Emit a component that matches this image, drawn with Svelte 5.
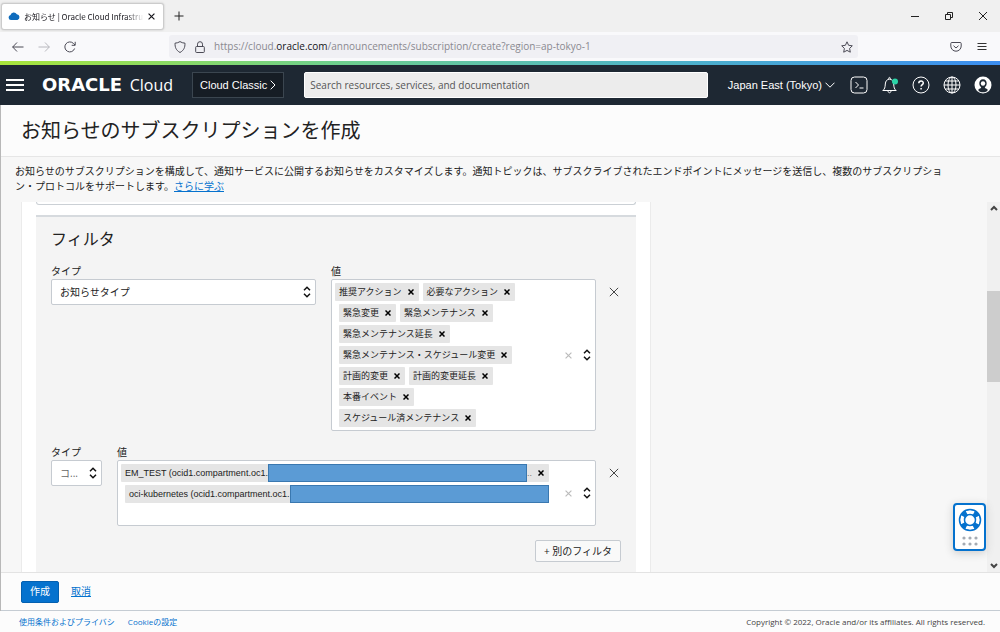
<script lang="ts">
  const announcementTypes = [
    '推奨アクション',
    '必要なアクション',
    '緊急変更',
    '緊急メンテナンス',
    '緊急メンテナンス延長',
    '緊急メンテナンス・スケジュール変更',
    '計画的変更',
    '計画的変更延長',
    '本番イベント',
    'スケジュール済メンテナンス',
  ];
</script>

{#snippet updown()}
  <svg class="updown" viewBox="0 0 8 12" aria-hidden="true">
    <path d="M1 4.2 4 1.2l3 3M1 7.8l3 3 3-3" />
  </svg>
{/snippet}

{#snippet cross()}
  <svg class="cross" viewBox="0 0 12 12" aria-hidden="true"><path d="m1 1 10 10M11 1 1 11" /></svg>
{/snippet}

<div class="window">
  <!-- Browser tabs -->
  <div class="tabs">
    <div class="tab">
      <svg class="tab__icon" viewBox="0 0 12 8" aria-hidden="true">
        <path d="M3 8a2.6 2.6 0 0 1-.5-5.100A3.500 3.500 0 0 1 8.800 2.200 3 3 0 0 1 9.500 8z" />
      </svg>
      <span class="tab__title">お知らせ | Oracle Cloud Infrastru</span>
      <button class="tab__close" aria-label="Close tab">{@render cross()}</button>
    </div>
    <button class="tabs__new" aria-label="New tab">
      <svg viewBox="0 0 10 10"><path d="M5 .5v9M.5 5h9" /></svg>
    </button>
    <div class="tabs__window">
      <button aria-label="Minimize"><svg viewBox="0 0 10 10"><path d="M1 5.500h8" /></svg></button>
      <button aria-label="Restore">
        <svg viewBox="0 0 10 10"><path d="M1.500 3.500h5v5h-5zM3.500 3.500v-2h5v5h-2" /></svg>
      </button>
      <button aria-label="Close"><svg viewBox="0 0 10 10"><path d="m1 1 8 8M9 1 1 9" /></svg></button>
    </div>
  </div>

  <!-- Browser toolbar -->
  <div class="toolbar">
    <button aria-label="Back"><svg viewBox="0 0 12 12"><path d="M11.500 6h-11M5 1.500.7 6 5 10.500" /></svg></button>
    <button class="toolbar__off" aria-label="Forward">
      <svg viewBox="0 0 12 12"><path d="M.5 6h11M7 1.500 11.300 6 7 10.500" /></svg>
    </button>
    <button aria-label="Reload">
      <svg viewBox="0 0 12 12"><path d="M10.600 7.500A5 5 0 1 1 9.500 2.500L11 4M11.200.8v3.500H7.700" /></svg>
    </button>
    <div class="address">
      <svg viewBox="0 0 12 12"><path d="M6 .6C4.500 1.600 3 2 1 2.200c0 4.300 1 7 5 9.300 4-2.300 5-5 5-9.300C9 2 7.500 1.600 6 .6z" /></svg>
      <svg viewBox="0 0 12 12">
        <path d="M2.500 5.500h7a.8.8 0 0 1 .8.8v4.400a.8.8 0 0 1-.8.8h-7a.8.8 0 0 1-.8-.8V6.300a.8.8 0 0 1 .8-.8zM3.500 5.500V3.200a2.500 2.500 0 0 1 5 0v2.300" />
      </svg>
      <span class="address__url">https://cloud.<b>oracle.com</b>/announcements/subscription/create?region=ap-tokyo-1</span>
      <button aria-label="Bookmark">
        <svg viewBox="0 0 12 12"><path d="m6 .8 1.600 3.500 3.700.5-2.700 2.600.7 3.800L6 9.400l-3.300 1.800.7-3.800L.7 4.800l3.700-.5z" /></svg>
      </button>
    </div>
    <button aria-label="Pocket">
      <svg viewBox="0 0 12 12">
        <path d="M1.800 1.500h8.400a1 1 0 0 1 1 1V5a5.200 5.200 0 0 1-10.400 0V2.500a1 1 0 0 1 1-1zM3.500 4.700 6 7l2.500-2.300" />
      </svg>
    </button>
    <button class="toolbar__menu" aria-label="Menu"><svg viewBox="0 0 12 12"><path d="M1.500 2.500h9M1.500 5.500h9M1.500 8.500h9" /></svg></button>
  </div>

  <!-- Console header -->
  <header class="header">
    <button class="header__menu" aria-label="Navigation menu">
      <svg viewBox="0 0 18 12"><path d="M0 1h18M0 6h18M0 11h18" /></svg>
    </button>
    <a class="logo" href="#home"><span class="logo__name">ORACLE</span><span class="logo__product">Cloud</span></a>
    <button class="classic">
      Cloud Classic
      <svg viewBox="0 0 6 10"><path d="m.7.700 4.300 4.300-4.300 4.300" /></svg>
    </button>
    <input class="search" type="search" aria-label="Search" placeholder="Search resources, services, and documentation" />
    <button class="region">
      Japan East (Tokyo)
      <svg viewBox="0 0 10 6"><path d="m.5.700 4.500 4.500L9.500.700" /></svg>
    </button>
    <div class="header__tools">
      <button aria-label="Cloud Shell">
        <svg viewBox="0 0 18 18"><rect x="1" y="1" width="16" height="16" rx="3.500" /><path d="m5.500 6 3 3-3 3M9.500 12h4" /></svg>
      </button>
      <button aria-label="Announcements">
        <svg viewBox="0 0 18 18">
          <path d="M1.800 14.500c2-1.600 2.300-3 2.500-6.500.2-3 1.800-4.800 4.200-4.800s4 1.800 4.200 4.800c.2 3.500.5 4.900 2.500 6.500zM7 14.800c0 2.600 3 2.600 3 0M7.700 3c0-2.200 1.600-2.200 1.600 0" />
          <circle class="dot" cx="14" cy="5.500" r="3" />
        </svg>
      </button>
      <button aria-label="Help">
        <svg viewBox="0 0 18 18">
          <circle cx="9" cy="9" r="8" />
          <path class="thick" d="M6.800 7.200C6.800 4.300 11.300 4.300 11.300 7c0 1.700-2.200 1.700-2.200 3.600M9.100 12v1.500" />
        </svg>
      </button>
      <button aria-label="Language">
        <svg viewBox="0 0 18 18">
          <circle cx="9" cy="9" r="8" />
          <ellipse cx="9" cy="9" rx="4" ry="8" />
          <path d="M9 1v16M1 9h16M2.300 5h13.400M2.300 13h13.400" />
        </svg>
      </button>
      <button aria-label="Profile">
        <svg viewBox="0 0 18 18">
          <circle class="disc" cx="9" cy="9" r="8.500" />
          <path class="person" d="M9 3.200c-2.400 0-3.700 1.700-3.700 4 0 1.800.8 3.200 1.900 4-.3 1.300-1.500 1.400-2.700 2v1.500c2.500 2 6.500 2 9 0v-1.500c-1.200-.6-2.400-.7-2.700-2 1.100-.8 1.900-2.200 1.900-4 0-2.300-1.300-4-3.700-4z" />
          <circle class="disc" cx="9" cy="7.500" r="2.200" />
        </svg>
      </button>
    </div>
  </header>

  <main class="page">
    <h1 class="page__title">お知らせのサブスクリプションを作成</h1>
    <p class="page__intro">
      お知らせのサブスクリプションを構成して、通知サービスに公開するお知らせをカスタマイズします。通知トピックは、サブスクライブされたエンドポイントにメッセージを送信し、複数のサブスクリプション・プロトコルをサポートします。<a href="#learn">さらに学ぶ</a>
    </p>

    <div class="scroller">
      <div class="card">
        <div class="card__previous"></div>
        <section class="filters">
          <h2>フィルタ</h2>

          <div class="filter">
            <div class="field">
              <label for="type-1">タイプ</label>
              <div class="select">
                <select id="type-1"><option>お知らせタイプ</option></select>
                {@render updown()}
              </div>
            </div>
            <div class="field" role="group" aria-labelledby="values-1">
              <span id="values-1">値</span>
              <div class="multi">
                <ul class="chips">
                  {#each announcementTypes as type}
                    <li class="chip">
                      {type}
                      <button aria-label="{type}を削除">{@render cross()}</button>
                    </li>
                  {/each}
                </ul>
                <button class="multi__clear" aria-label="クリア">{@render cross()}</button>
                <button aria-label="開く">{@render updown()}</button>
              </div>
            </div>
            <button class="filter__remove" aria-label="フィルタを削除">{@render cross()}</button>
          </div>

          <div class="filter">
            <div class="field field--narrow">
              <label for="type-2">タイプ</label>
              <div class="select select--muted">
                <select id="type-2"><option>コ...</option></select>
                {@render updown()}
              </div>
            </div>
            <div class="field" role="group" aria-labelledby="values-2">
              <span id="values-2">値</span>
              <div class="multi multi--tall">
                <ul class="chips">
                  <li class="chip chip--wide">
                    EM_TEST (ocid1.compartment.oc1.<span class="mask"></span><span class="chip__more">..</span>
                    <button aria-label="EM_TESTを削除">{@render cross()}</button>
                  </li>
                  <li class="chip chip--wide chip--masked">
                    oci-kubernetes (ocid1.compartment.oc1.<span class="mask"></span>
                  </li>
                </ul>
                <button class="multi__clear" aria-label="クリア">{@render cross()}</button>
                <button aria-label="開く">{@render updown()}</button>
              </div>
            </div>
            <button class="filter__remove" aria-label="フィルタを削除">{@render cross()}</button>
          </div>

          <button class="filters__add">+ 別のフィルタ</button>
        </section>
      </div>

      <div class="scrollbar" aria-hidden="true">
        <svg viewBox="0 0 8 6"><path d="m1 5 3-3 3 3" /></svg>
        <div class="scrollbar__thumb"></div>
        <svg viewBox="0 0 8 6"><path d="m1 1 3 3 3-3" /></svg>
      </div>

      <button class="help" aria-label="Support">
        <svg viewBox="0 0 24 24">
          <circle class="ring" cx="12" cy="12" r="8" />
          <circle class="ring-gap" cx="12" cy="12" r="8" />
          <circle class="ring-line" cx="12" cy="12" r="10.500" />
          <circle class="ring-line" cx="12" cy="12" r="5.500" />
        </svg>
        <svg class="help__grip" viewBox="0 0 16 10">
          {#each [2, 8, 14] as x}
            <circle cx={x} cy="2" r="1.600" />
            <circle cx={x} cy="8" r="1.600" />
          {/each}
        </svg>
      </button>
    </div>

    <div class="actions">
      <button class="actions__create">作成</button>
      <a href="#cancel">取消</a>
    </div>
  </main>

  <footer class="footer">
    <a href="#terms">使用条件およびプライバシ</a>
    <a href="#cookies">Cookieの設定</a>
    <span>Copyright © 2022, Oracle and/or its affiliates. All rights reserved.</span>
  </footer>
</div>

<style>
  :global(body) {
    margin: 0;
  }

  .window {
    display: flex;
    flex-direction: column;
    height: 100vh;
    overflow: hidden;
    background: #fcfcfc;
    color: #222;
    font: 10px/15px 'Open Sans', 'Noto Sans CJK JP', sans-serif;
  }

  .window * {
    box-sizing: border-box;
  }

  button {
    display: flex;
    align-items: center;
    justify-content: center;
    padding: 0;
    border: 0;
    background: none;
    color: inherit;
    font: inherit;
  }

  svg {
    display: block;
    flex-shrink: 0;
    width: 12px;
    height: 12px;
    fill: none;
    stroke: currentColor;
  }

  a {
    color: #0572ce;
  }

  /* Browser */
  .tabs {
    display: flex;
    align-items: center;
    flex-shrink: 0;
    height: 32px;
    padding: 0 12px 0 1px;
    background: #f0f0f0;
  }

  .tab {
    display: flex;
    align-items: center;
    gap: 4px;
    width: 163px;
    height: 27px;
    padding: 0 8px 0 6px;
    border: 1px solid #ccc;
    border-radius: 3px;
    background: #fff;
    box-shadow: 0 0 2px #bbb;
    color: #15141a;
    font-family: 'Noto Sans CJK JP', sans-serif;
    font-size: 8px;
  }

  .tab__icon {
    height: 8px;
    fill: #0f6cbd;
    stroke: none;
  }

  .tab__title {
    flex: 1;
    overflow: hidden;
    white-space: nowrap;
    mask-image: linear-gradient(to right, #000 85%, transparent);
  }

  .tab__close svg {
    width: 7px;
    height: 7px;
    stroke-width: 2;
  }

  .tabs__new {
    margin-left: 10px;
  }

  .tabs__new svg,
  .tabs__window svg {
    width: 10px;
    height: 10px;
  }

  .tabs__window {
    display: flex;
    gap: 24px;
    margin-left: auto;
  }

  .toolbar {
    display: flex;
    align-items: center;
    gap: 14px;
    flex-shrink: 0;
    height: 29px;
    padding: 0 12px;
    background: #f9f9fb;
    color: #4b4a55;
  }

  .toolbar__off {
    color: #b8b8be;
  }

  .toolbar__menu {
    color: #333;
  }

  .address {
    display: flex;
    align-items: center;
    gap: 8px;
    flex: 1;
    height: 23px;
    margin: 0 78px 0 79px;
    padding: 0 5px;
    border-radius: 3px;
    background: #f0f0f4;
  }

  .address__url {
    flex: 1;
    color: #8a8990;
    white-space: nowrap;
  }

  .address__url b {
    color: #15141a;
    font-weight: 400;
  }

  /* Console header */
  .header {
    display: flex;
    align-items: center;
    flex-shrink: 0;
    height: 44px;
    padding: 0 8px 0 6px;
    border-top: 4px solid;
    border-image: linear-gradient(to right, #a9e53b, #6fd08c 33%, #4eb3c8 66%, #3b8df0) 1;
    background: #1e2833;
    color: #fff;
    font-family: 'Liberation Sans', sans-serif;
    font-size: 11px;
  }

  .header__menu svg {
    width: 18px;
    height: 12px;
    stroke-width: 2;
  }

  .logo {
    display: flex;
    align-items: center;
    justify-content: space-between;
    width: 131px;
    margin: 0 19px 0 18px;
    color: #fff;
    line-height: 20px;
    text-decoration: none;
  }

  .logo__name {
    font: 700 18px/20px 'DejaVu Sans', sans-serif;
  }

  .logo__product {
    font: 400 16px/20px 'Open Sans', sans-serif;
  }

  .classic {
    gap: 3px;
    height: 26px;
    padding: 0 7px;
    border: 1px solid #3b4650;
    background: #161d25;
    white-space: nowrap;
  }

  .classic svg {
    width: 6px;
    height: 10px;
  }

  .search {
    flex: 1;
    min-width: 0;
    height: 26px;
    margin: 0 20px;
    padding: 0 5px;
    border: 1px solid #fff;
    border-radius: 2px;
    background: #ececec;
    font: 10px/15px 'Open Sans', sans-serif;
  }

  .search::placeholder {
    color: #555;
    opacity: 1;
  }

  .region {
    gap: 3px;
    white-space: nowrap;
  }

  .region svg {
    width: 10px;
    height: 6px;
  }

  .header__tools {
    display: flex;
    gap: 13px;
    margin-left: 15px;
  }

  .header__tools svg {
    width: 18px;
    height: 18px;
  }

  .header__tools .thick {
    stroke-width: 1.500;
  }

  .dot {
    fill: #2bd4a7;
    stroke: none;
  }

  .disc {
    fill: #fff;
    stroke: none;
  }

  .person {
    fill: #1e2833;
    stroke: none;
  }

  /* Page */
  .page {
    display: flex;
    flex-direction: column;
    flex: 1;
    min-height: 0;
    border-left: 1px solid #b8b8b8;
  }

  .page__title {
    margin: 0;
    padding: 11px 20px 10px;
    border-bottom: 1px solid #e6e6e6;
    font-size: 20px;
    line-height: 30px;
    font-weight: 400;
  }

  .page__intro {
    margin: 0;
    padding: 7px 50px 8px 14px;
    background: #f7f7f7;
  }

  .scroller {
    position: relative;
    display: flex;
    justify-content: space-between;
    flex: 1;
    min-height: 0;
    overflow: hidden;
    padding-left: 20px;
    background: #f7f7f7;
  }

  .card {
    width: 100%;
    max-width: 630px;
    padding: 0 14px;
    border: solid #ebebeb;
    border-width: 0 1px;
    background: #fff;
  }

  .card__previous {
    height: 3px;
    margin-bottom: 10px;
    border: 1px solid #cbd0d5;
    border-top: 0;
    border-radius: 0 0 3px 3px;
  }

  .filters {
    min-height: 100%;
    padding: 10px 15px;
    border-top: 2px solid #d6dade;
    background: #f4f4f4;
  }

  .filters h2 {
    margin: 0 0 13px;
    font-size: 16px;
    line-height: 24px;
    font-weight: 400;
  }

  .filter {
    display: flex;
    align-items: flex-start;
    margin-bottom: 14px;
  }

  .field {
    display: flex;
    flex-direction: column;
    flex: 1;
    min-width: 0;
  }

  .field + .field {
    margin-left: 15px;
  }

  .field--narrow {
    flex: 0 0 51px;
  }

  .select {
    position: relative;
    display: flex;
    align-items: center;
  }

  .select select {
    width: 100%;
    height: 26px;
    padding: 0 8px;
    appearance: none;
    border: 1px solid #c6cbd1;
    border-radius: 2px;
    background: #fff;
    color: inherit;
    font: inherit;
  }

  .select .updown {
    position: absolute;
    right: 5px;
    pointer-events: none;
  }

  .select--muted select {
    color: #666;
  }

  .updown {
    width: 8px;
    height: 12px;
    stroke: #111;
    stroke-width: 1.500;
  }

  .multi {
    display: flex;
    align-items: center;
    padding: 3px 4px 3px 3px;
    border: 1px solid #c6cbd1;
    border-radius: 2px;
    background: #fff;
  }

  .multi--tall {
    min-height: 66px;
  }

  .multi__clear {
    margin: 0 11px 0 16px;
    color: #bbb;
  }

  .multi__clear .cross {
    width: 7px;
    height: 7px;
    stroke-width: 2;
  }

  .chips {
    display: flex;
    flex-wrap: wrap;
    align-self: flex-start;
    flex: 1;
    row-gap: 3px;
    margin: 0;
    padding: 0;
    list-style: none;
  }

  .chip {
    display: flex;
    align-items: center;
    height: 18px;
    margin-left: 4px;
    padding: 0 5px 0 4px;
    border-radius: 1px;
    background: #e5e5e5;
    font-family: 'Liberation Sans', 'Noto Sans CJK JP', sans-serif;
    font-size: 9px;
    white-space: nowrap;
  }

  .chip:first-child {
    margin-left: 0;
  }

  .chip button {
    margin-left: 6px;
  }

  .chip .cross {
    width: 6px;
    height: 6px;
    stroke: #000;
    stroke-width: 3;
  }

  .chip--wide {
    flex: 1 0 90%;
  }

  .chip--masked {
    padding-right: 0;
  }

  .chip__more {
    color: #777;
  }

  .mask {
    flex: 1;
    align-self: stretch;
    border: 1px solid #3a78b0;
    background: #5b9bd5;
  }

  .filter__remove {
    margin: 23px 2px 0 13px;
  }

  .filter__remove .cross {
    width: 10px;
    height: 10px;
  }

  .filters__add {
    height: 22px;
    margin-left: auto;
    padding: 0 8px;
    border: 1px solid #c6cbd1;
    border-radius: 2px;
    background: #f9f9f9;
  }

  .scrollbar {
    display: flex;
    flex-direction: column;
    align-items: center;
    width: 13px;
    padding: 3px 0;
    background: #f0f0f0;
  }

  .scrollbar svg {
    width: 8px;
    height: 6px;
    stroke: #444;
    stroke-width: 2;
  }

  .scrollbar__thumb {
    width: 13px;
    height: 25%;
    margin: 80px 0 auto;
    background: #cdcdcd;
  }

  .help {
    position: absolute;
    right: 14px;
    bottom: 21px;
    flex-direction: column;
    gap: 4px;
    width: 33px;
    height: 48px;
    border: 2px solid #0572ce;
    border-radius: 4px;
    background: #fff;
    box-shadow: 0 2px 8px #ccc;
  }

  .help svg {
    width: 24px;
    height: 24px;
    stroke: #0572ce;
  }

  .ring {
    stroke-width: 5;
  }

  .help .ring-gap {
    stroke: #fff;
    stroke-width: 4;
    stroke-dasharray: 7.500 5.066;
    stroke-dashoffset: 3.750;
  }

  .help .ring-line {
    stroke-width: 1.500;
  }

  .help .help__grip {
    width: 16px;
    height: 10px;
    fill: #a5abb3;
    stroke: none;
  }

  .actions {
    display: flex;
    align-items: center;
    gap: 12px;
    flex-shrink: 0;
    height: 39px;
    padding-left: 20px;
    border-top: 1px solid #e3e3e3;
    border-bottom: 1px solid #c5ccd3;
  }

  .actions__create {
    height: 22px;
    padding: 0 8px;
    border: 1px solid #0460b0;
    border-radius: 2px;
    background: #0572ce;
    color: #fff;
  }

  /* Footer */
  .footer {
    display: flex;
    align-items: center;
    gap: 13px;
    flex-shrink: 0;
    height: 21px;
    padding: 0 15px 0 19px;
    font-size: 8px;
  }

  .footer a {
    text-decoration: none;
  }

  .footer span {
    margin-left: auto;
    color: #444;
  }
</style>
